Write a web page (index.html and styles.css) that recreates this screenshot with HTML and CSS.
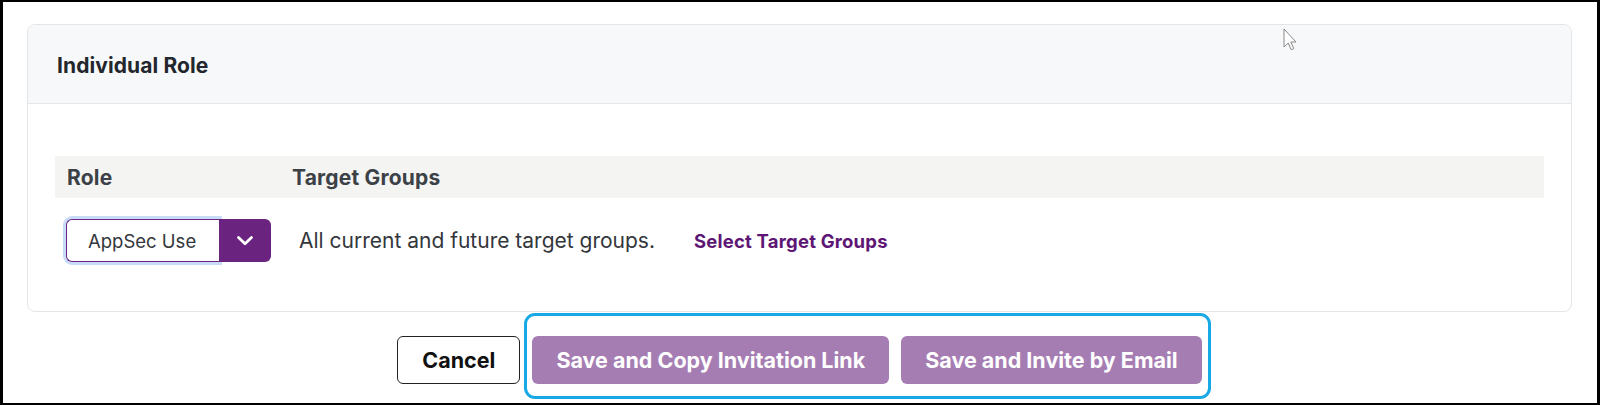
FILE: index.html
```html
<!DOCTYPE html>
<html lang="en">
<head>
<meta charset="utf-8">
<title>Individual Role</title>
<link rel="stylesheet" href="styles.css">
</head>
<body>
<div class="frame">
  <section class="card">
    <header class="card-head">
      <h2 class="card-title">Individual Role</h2>
    </header>
    <div class="card-body">
      <div class="table-head">
        <div class="th">Role</div>
        <div class="th">Target Groups</div>
      </div>
      <div class="table-row">
        <div class="role-cell">
          <div class="select">
            <div class="select-value">AppSec Use</div>
            <div class="select-btn">
              <svg width="18" height="11" viewBox="0 0 18 11" aria-hidden="true"><path d="M2.5 2.5l6.5 6.2 6.5-6.2" fill="none" stroke="#fff" stroke-width="2.8" stroke-linecap="round" stroke-linejoin="round"/></svg>
            </div>
          </div>
        </div>
        <div class="groups-cell">
          <span class="groups-text">All current and future target groups.</span>
          <a class="groups-link" href="#">Select Target Groups</a>
        </div>
      </div>
    </div>
  </section>
  <div class="actions">
    <button class="btn btn-cancel" type="button">Cancel</button>
    <div class="save-group">
      <button class="btn btn-save" type="button">Save and Copy Invitation Link</button>
      <button class="btn btn-save" type="button">Save and Invite by Email</button>
    </div>
  </div>
  <svg class="cursor" width="14" height="23" viewBox="0 0 14 23" aria-hidden="true"><path d="M1 1v18l4.2-4 3 6.8 2.6-1.2-3-6.6H13z" fill="#fff" stroke="#8a8a8a" stroke-width="1" stroke-linejoin="round"/></svg>
</div>
</body>
</html>
```
FILE: styles.css
```css
html, body {
  margin: 0;
  padding: 0;
  background: #fff;
}
body {
  font-family: Inter, "Noto Sans", "Liberation Sans", sans-serif;
  color: #2b2f35;
}
.frame {
  position: relative;
  width: 1600px;
  height: 405px;
  box-sizing: border-box;
  border-style: solid;
  border-color: #000;
  border-width: 2px 3px 2px 3px;
  padding: 22px 25px 0 24px;
  overflow: hidden;
}
.card {
  border: 1px solid #e4e5e6;
  border-radius: 8px;
  overflow: hidden;
  background: #fff;
}
.card-head {
  height: 78px;
  background: #f7f8f9;
  border-bottom: 1px solid #e6e7e8;
  display: flex;
  align-items: center;
  padding-left: 29px;
}
.card-title {
  margin: 0;
  font-size: 21px;
  font-weight: 700;
  color: #23272d;
  letter-spacing: 0.1px;
  line-height: 1;
  padding-top: 2px;
}
.card-body {
  padding: 52px 27px 49px 27px;
}
.table-head {
  display: grid;
  grid-template-columns: 225px 1fr;
  height: 42px;
  align-items: center;
  padding: 0 12px;
  background: #f4f4f3;
}
.th {
  font-size: 21px;
  font-weight: 700;
  color: #3c4147;
  line-height: 1;
  letter-spacing: 0.2px;
}
.table-row {
  display: grid;
  grid-template-columns: 233px 1fr;
  align-items: center;
  margin-top: 21px;
  padding-left: 11px;
}
.select {
  display: flex;
  width: 205px;
  height: 43px;
}
.select-value {
  flex: 1;
  box-sizing: border-box;
  border: 1px solid #6b2782;
  border-right: none;
  border-radius: 6px 0 0 6px;
  box-shadow: 0 0 0 3px #c8dcf8;
  display: flex;
  align-items: center;
  padding-left: 21px;
  font-size: 18.5px;
  color: #33363b;
  background: #fff;
}
.select-btn {
  width: 52px;
  background: #6b2380;
  border-radius: 0 6px 6px 0;
  display: flex;
  align-items: center;
  justify-content: center;
}
.groups-cell {
  display: flex;
  align-items: center;
  gap: 39px;
}
.groups-text {
  font-size: 21px;
  color: #33363b;
}
.groups-link {
  font-size: 18.5px;
  font-weight: 700;
  color: #5e1675;
  text-decoration: none;
  letter-spacing: 0.2px;
}
.actions {
  display: flex;
  justify-content: center;
  gap: 12px;
  margin-top: 24px;
}
.save-group {
  position: relative;
  display: flex;
  gap: 12px;
}
.save-group::after {
  content: "";
  position: absolute;
  top: -23px;
  left: -8px;
  right: -9px;
  bottom: -15px;
  border: 3px solid #17a8e6;
  border-radius: 11px;
  pointer-events: none;
}
.btn {
  height: 48px;
  padding: 0 24px;
  border-radius: 6px;
  font-family: inherit;
  font-size: 21.5px;
  font-weight: 700;
  cursor: pointer;
}
.btn-cancel {
  background: #fff;
  border: 1px solid #222;
  color: #111;
}
.btn-save {
  background: #a57db3;
  border: none;
  color: #fff;
}
.cursor {
  position: absolute;
  left: 1280px;
  top: 26px;
}
```
